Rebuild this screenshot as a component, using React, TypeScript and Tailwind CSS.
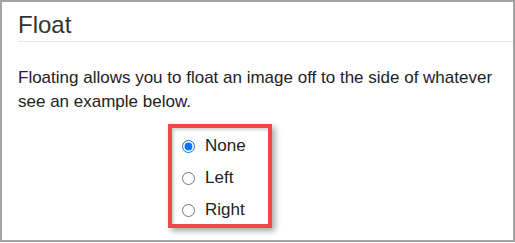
export default function App() {
  const options = ['None', 'Left', 'Right'];

  return (
    <div className="w-[515px] h-[242px] bg-white border-2 border-[#a3a3a3] overflow-hidden font-['Liberation_Sans',Arial,sans-serif] text-[#333]">
      <div className="pl-4">
        <h2 className="mt-[9px] pb-[2px] text-[24px] leading-[28px] border-b border-[#e5e5e5]">Float</h2>
        <p className="mt-[24px] text-[17px] leading-[24px] whitespace-nowrap text-[#222]">
          Floating allows you to float an image off to the side of whatever
          <br />
          see an example below.
        </p>
        <div className="ml-[150px] mt-[10px] w-[104px] h-[104px] border-4 border-[#f04747] shadow-[inset_2px_2px_3px_rgba(0,0,0,0.18),3px_3px_6px_rgba(0,0,0,0.35)] pt-[2px] pl-[10px]">
          {options.map((o) => (
            <label key={o} className="flex items-center h-8 gap-[10px] text-[17px] text-[#222]">
              <input type="radio" name="float" defaultChecked={o === 'None'} className="m-0 w-[13px] h-[13px]" />
              {o}
            </label>
          ))}
        </div>
      </div>
    </div>
  );
}
